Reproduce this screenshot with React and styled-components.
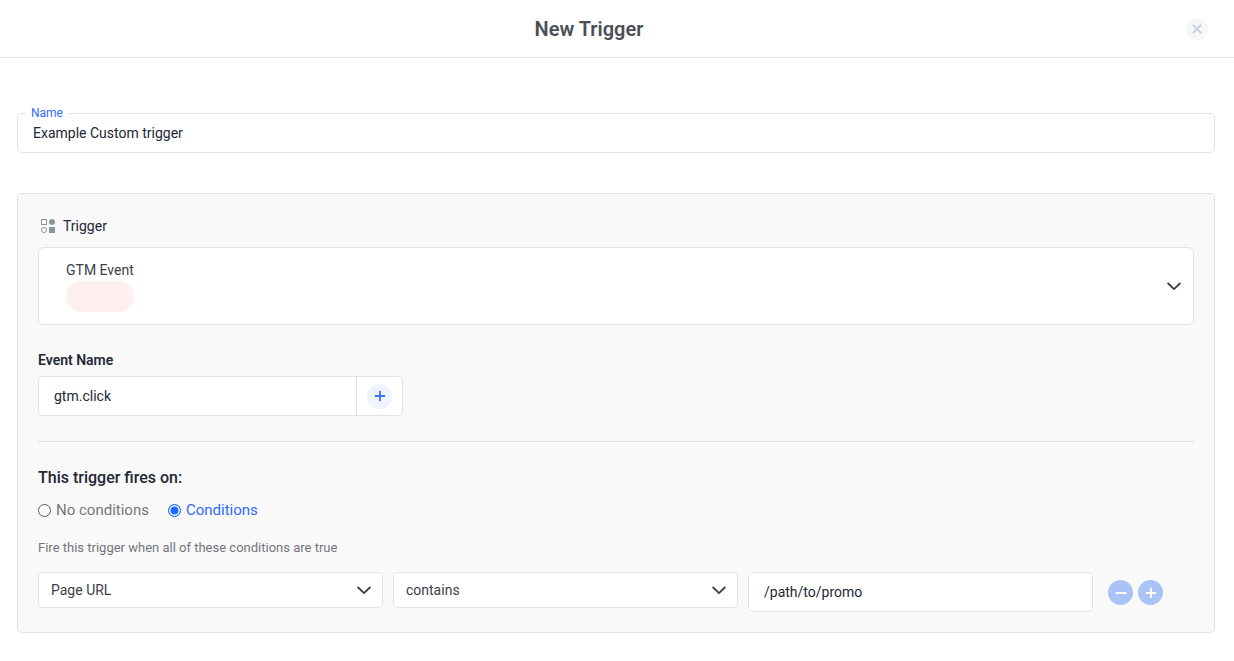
import React from "react";
import styled, { createGlobalStyle } from "styled-components";

const Global = createGlobalStyle`
  html, body { margin: 0; padding: 0; background: #fff; }
  * { box-sizing: border-box; }
  body { font-family: Roboto, "Liberation Sans", sans-serif; color: #222736; -webkit-font-smoothing: antialiased; }
`;

const Page = styled.div`
  width: 1234px;
  height: 661px;
  overflow: hidden;
  background: #fff;
`;
const Header = styled.header`
  height: 58px;
  border-bottom: 1px solid #e3e3e3;
  padding: 0 26px 0 0;
  display: flex;
  align-items: center;
`;
const Title = styled.h1`
  margin: 0;
  flex: 1;
  text-align: center;
  font-size: 20px;
  line-height: 24px;
  font-weight: 600;
  color: #4b4f55;
  padding-right: 8px;
`;
const CloseButton = styled.button`
  width: 22px;
  height: 22px;
  border: 0;
  padding: 0;
  border-radius: 50%;
  background: #f6f6f8;
  display: flex;
  align-items: center;
  justify-content: center;
`;
const Body = styled.main`
  padding: 55px 19px 0 17px;
  display: flex;
  flex-direction: column;
  gap: 40px;
`;
const NameField = styled.div`
  position: relative;
  height: 40px;
  border: 1px solid #e3e3e3;
  border-radius: 5px;
  background: #fff;
  display: flex;
  align-items: center;
  padding: 0 15px;
  font-size: 14px;
`;
const Legend = styled.label`
  position: absolute;
  left: 8px;
  top: -7px;
  padding: 0 5px;
  background: #fff;
  font-size: 12px;
  line-height: 13px;
  color: #2f6bff;
`;
const Panel = styled.section`
  height: 440px;
  border: 1px solid #e3e3e3;
  border-radius: 5px;
  background: #f9f9f9;
  padding: 20px 20px 0;
`;
const SectionTitle = styled.div`
  display: flex;
  align-items: center;
  gap: 8px;
  height: 24px;
  margin-left: 3px;
  font-size: 14px;
  color: #222736;
`;
const TriggerSelect = styled.div`
  margin-top: 9px;
  height: 78px;
  border: 1px solid #e3e3e3;
  border-radius: 6px;
  background: #fff;
  padding: 14px 27px;
  display: flex;
  align-items: center;
  justify-content: space-between;
`;
const TriggerInfo = styled.div`
  display: flex;
  flex-direction: column;
  align-self: flex-start;
`;
const TriggerName = styled.span`
  font-size: 14px;
  line-height: 16px;
  color: #3c4048;
`;
const EmptyPill = styled.span`
  margin-top: 3px;
  width: 68px;
  height: 31px;
  border-radius: 16px;
  background: #fff0ef;
`;
const ChevronSlot = styled.span`
  display: flex;
  margin-right: -15px;
`;
const FieldLabel = styled.div`
  margin-top: 27px;
  font-size: 14px;
  line-height: 17px;
  font-weight: 600;
  color: #222736;
`;
const InputGroup = styled.div`
  margin-top: 7px;
  width: 365px;
  height: 40px;
  border: 1px solid #e3e3e3;
  border-radius: 5px;
  background: #fff;
  display: flex;
`;
const GroupText = styled.div`
  flex: 1;
  display: flex;
  align-items: center;
  padding-left: 15px;
  font-size: 14px;
  border-right: 1px solid #e3e3e3;
`;
const GroupAction = styled.div`
  width: 45px;
  display: flex;
  align-items: center;
  justify-content: center;
`;
const SoftPlus = styled.button`
  width: 25px;
  height: 25px;
  padding: 0;
  border: 0;
  border-radius: 50%;
  background: #f0f2fc;
  display: flex;
  align-items: center;
  justify-content: center;
`;
const Divider = styled.hr`
  margin: 25px 0 0;
  border: 0;
  border-top: 1px solid #e3e3e3;
`;
const Heading = styled.h2`
  margin: 26px 0 0;
  font-size: 16px;
  line-height: 20px;
  font-weight: 500;
  color: #222736;
`;
const RadioRow = styled.div`
  margin-top: 12px;
  display: flex;
  gap: 19px;
  height: 20px;
`;
const RadioOption = styled.label`
  display: flex;
  align-items: center;
  gap: 5px;
  font-size: 15px;
  color: ${p => (p.$active ? "#2f6bff" : "#74777d")};
`;
const RadioDot = styled.span`
  width: 13px;
  height: 13px;
  border-radius: 50%;
  background: ${p => (p.$active ? "#1a6bff" : "#fff")};
  border: ${p => (p.$active ? "1.5px solid #1a6bff" : "1px solid #55585e")};
  box-shadow: ${p => (p.$active ? "inset 0 0 0 1.5px #fff" : "none")};
`;
const Hint = styled.p`
  margin: 20px 0 0;
  font-size: 13px;
  line-height: 16px;
  color: #73767c;
`;
const ConditionRow = styled.div`
  margin-top: 16px;
  display: flex;
  gap: 10px;
  align-items: flex-start;
`;
const SelectBox = styled.div`
  width: 345px;
  height: 36px;
  border: 1px solid #e3e3e3;
  border-radius: 5px;
  background: #fff;
  display: flex;
  align-items: center;
  justify-content: space-between;
  padding: 0 11px 0 12px;
  font-size: 14px;
  color: #3c4048;
`;
const TextBox = styled.div`
  width: 345px;
  height: 40px;
  border: 1px solid #e3e3e3;
  border-radius: 5px;
  background: #fff;
  display: flex;
  align-items: center;
  padding-left: 15px;
  font-size: 14px;
  color: #222736;
`;
const RowActions = styled.div`
  display: flex;
  gap: 5px;
  margin: 8px 0 0 5px;
`;
const RoundAction = styled.button`
  width: 25px;
  height: 25px;
  padding: 0;
  border: 0;
  border-radius: 50%;
  background: #a9c3f7;
  display: flex;
  align-items: center;
  justify-content: center;
`;

const Chevron = () => (
  <svg width="14" height="9" viewBox="0 0 14 9" fill="none">
    <path d="M1.2 1.5 7 7.2l5.8-5.7" stroke="#3b3f46" strokeWidth="1.8" strokeLinecap="round" strokeLinejoin="round" />
  </svg>
);
const Plus = ({ color, size = 12, w = 1.8 }) => (
  <svg width={size} height={size} viewBox="0 0 12 12" fill="none">
    <path d="M6 .8v10.4M.8 6h10.4" stroke={color} strokeWidth={w} />
  </svg>
);
const Minus = () => (
  <svg width="12" height="12" viewBox="0 0 12 12" fill="none">
    <path d="M.5 6h11" stroke="#fff" strokeWidth="1.8" />
  </svg>
);
const Shapes = () => (
  <svg width="14" height="14" viewBox="0 0 14 14" fill="none">
    <rect x="0.5" y="0.5" width="5" height="5" stroke="#8b959c" />
    <circle cx="11" cy="3" r="3" fill="#8b959c" />
    <circle cx="3" cy="11" r="2.5" stroke="#8b959c" />
    <rect x="8" y="8" width="6" height="6" fill="#8b959c" />
  </svg>
);

export default function App() {
  return (
    <Page>
      <Global />
      <Header>
        <Title>New Trigger</Title>
        <CloseButton aria-label="Close">
          <svg width="10" height="10" viewBox="0 0 10 10" fill="none">
            <path d="M.8.8l8.4 8.4M9.2.8.8 9.2" stroke="#c6cde2" strokeWidth="1.9" />
          </svg>
        </CloseButton>
      </Header>
      <Body>
        <NameField>
          <Legend>Name</Legend>
          Example Custom trigger
        </NameField>
        <Panel>
          <SectionTitle>
            <Shapes />
            Trigger
          </SectionTitle>
          <TriggerSelect>
            <TriggerInfo>
              <TriggerName>GTM Event</TriggerName>
              <EmptyPill />
            </TriggerInfo>
            <ChevronSlot><Chevron /></ChevronSlot>
          </TriggerSelect>
          <FieldLabel>Event Name</FieldLabel>
          <InputGroup>
            <GroupText>gtm.click</GroupText>
            <GroupAction>
              <SoftPlus aria-label="Add"><Plus color="#3b74f0" /></SoftPlus>
            </GroupAction>
          </InputGroup>
          <Divider />
          <Heading>This trigger fires on:</Heading>
          <RadioRow>
            <RadioOption><RadioDot />No conditions</RadioOption>
            <RadioOption $active><RadioDot $active />Conditions</RadioOption>
          </RadioRow>
          <Hint>Fire this trigger when all of these conditions are true</Hint>
          <ConditionRow>
            <SelectBox>Page URL<Chevron /></SelectBox>
            <SelectBox>contains<Chevron /></SelectBox>
            <TextBox>/path/to/promo</TextBox>
            <RowActions>
              <RoundAction aria-label="Remove"><Minus /></RoundAction>
              <RoundAction aria-label="Add"><Plus color="#fff" /></RoundAction>
            </RowActions>
          </ConditionRow>
        </Panel>
      </Body>
    </Page>
  );
}
